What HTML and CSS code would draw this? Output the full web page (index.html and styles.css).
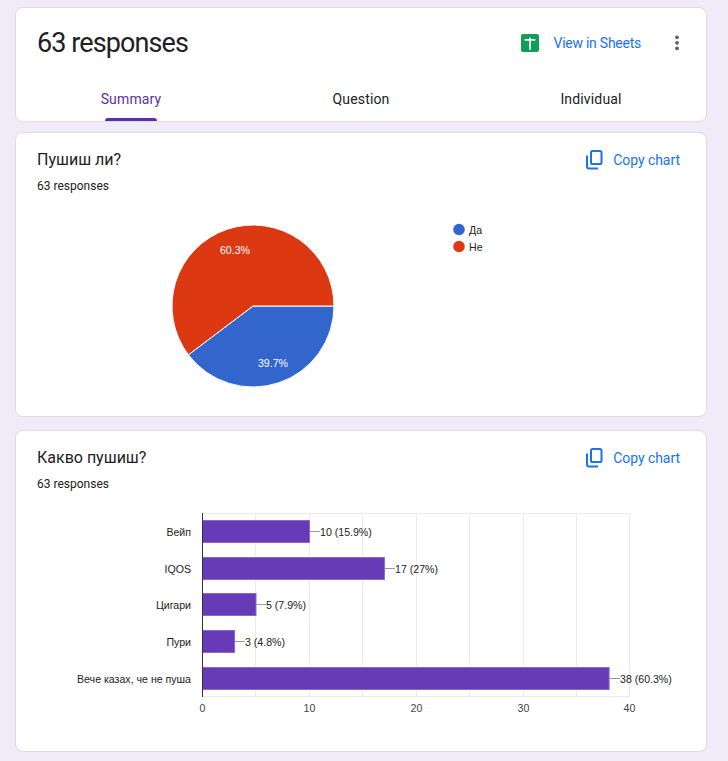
FILE: index.html
```html
<!DOCTYPE html>
<html>
<head>
<meta charset="utf-8">
<link rel="stylesheet" href="styles.css">
</head>
<body>
<div class="page">
  <section class="card head-card">
    <div class="head-row">
      <h1 class="count">63 responses</h1>
      <a class="sheets-btn">
        <svg class="sheets-icon" width="18" height="18" viewBox="0 0 18 18">
          <rect x="0" y="0" width="18" height="18" rx="2" fill="#0f9d58"/>
          <rect x="3.6" y="5" width="10.8" height="1.7" fill="#fff"/>
          <rect x="8.15" y="3.6" width="1.7" height="12.2" fill="#fff"/>
        </svg>
        <span>View in Sheets</span>
      </a>
      <button class="more-btn" aria-label="More">
        <svg width="4" height="16" viewBox="0 0 4 16">
          <circle cx="2" cy="2.3" r="1.9" fill="#5f6368"/>
          <circle cx="2" cy="7.8" r="1.9" fill="#5f6368"/>
          <circle cx="2" cy="13.3" r="1.9" fill="#5f6368"/>
        </svg>
      </button>
    </div>
    <nav class="tabs">
      <div class="tab active"><span>Summary</span><i class="indicator"></i></div>
      <div class="tab"><span>Question</span></div>
      <div class="tab"><span>Individual</span></div>
    </nav>
  </section>

  <section class="card q-card pie-card">
    <div class="q-head">
      <div class="q-titles">
        <h2 class="q-title">Пушиш ли?</h2>
        <div class="q-count">63 responses</div>
      </div>
      <a class="copy-btn">
        <svg width="18" height="20" viewBox="0 0 18 20">
          <rect x="6" y="1" width="10.5" height="13" rx="1.6" fill="none" stroke="#1a73e8" stroke-width="2"/>
          <path d="M2 5.5V16.5a2 2 0 0 0 2 2H13" fill="none" stroke="#1a73e8" stroke-width="2"/>
        </svg>
        <span>Copy chart</span>
      </a>
    </div>
    <svg class="chart pie" width="648" height="200" viewBox="0 0 648 200">
      <path d="M216 106 L297 106 A81 81 0 0 1 151.39 154.85 Z" fill="#3366cc" stroke="#fff" stroke-width="1"/>
      <path d="M216 106 L151.39 154.85 A81 81 0 1 1 297 106 Z" fill="#dc3912" stroke="#fff" stroke-width="1"/>
      <text x="198" y="54" class="pie-label" text-anchor="middle">60.3%</text>
      <text x="236" y="167" class="pie-label" text-anchor="middle">39.7%</text>
      <circle cx="422" cy="29.5" r="5.8" fill="#3366cc"/>
      <text x="432" y="33.5" class="legend">Да</text>
      <circle cx="422" cy="46.5" r="5.8" fill="#dc3912"/>
      <text x="432" y="50.5" class="legend">Не</text>
    </svg>
  </section>

  <section class="card q-card bar-card">
    <div class="q-head">
      <div class="q-titles">
        <h2 class="q-title">Какво пушиш?</h2>
        <div class="q-count">63 responses</div>
      </div>
      <a class="copy-btn">
        <svg width="18" height="20" viewBox="0 0 18 20">
          <rect x="6" y="1" width="10.5" height="13" rx="1.6" fill="none" stroke="#1a73e8" stroke-width="2"/>
          <path d="M2 5.5V16.5a2 2 0 0 0 2 2H13" fill="none" stroke="#1a73e8" stroke-width="2"/>
        </svg>
        <span>Copy chart</span>
      </a>
    </div>
    <svg class="chart bars" width="648" height="237" viewBox="0 0 648 237">
      <g stroke="#ebebeb" stroke-width="1">
        <line x1="218.5" y1="15" x2="218.5" y2="199"/>
        <line x1="272.5" y1="15" x2="272.5" y2="199"/>
        <line x1="325.5" y1="15" x2="325.5" y2="199"/>
        <line x1="379.5" y1="15" x2="379.5" y2="199"/>
        <line x1="432.5" y1="15" x2="432.5" y2="199"/>
        <line x1="486.5" y1="15" x2="486.5" y2="199"/>
        <line x1="539.5" y1="15" x2="539.5" y2="199"/>
        <line x1="592.5" y1="15" x2="592.5" y2="199"/>
        <line x1="165" y1="15.5" x2="593" y2="15.5"/>
        <line x1="165" y1="198.5" x2="593" y2="198.5"/>
      </g>
      <g fill="#673ab7" stroke="#8c68c9" stroke-width="1">
        <rect x="165.5" y="22.5" width="107" height="22"/>
        <rect x="165.5" y="59.5" width="181.9" height="22"/>
        <rect x="165.5" y="95.5" width="53.5" height="22"/>
        <rect x="165.5" y="132.5" width="32.1" height="22"/>
        <rect x="165.5" y="169.5" width="406.6" height="22"/>
      </g>
      <line x1="165.5" y1="15" x2="165.5" y2="199" stroke="#333" stroke-width="1"/>
      <g stroke="#999" stroke-width="1">
        <line x1="273" y1="33.5" x2="283" y2="33.5"/>
        <line x1="348" y1="70.5" x2="358" y2="70.5"/>
        <line x1="219" y1="106.5" x2="229" y2="106.5"/>
        <line x1="198" y1="143.5" x2="208" y2="143.5"/>
        <line x1="573" y1="180.5" x2="583" y2="180.5"/>
      </g>
      <g class="ann">
        <text x="283" y="37.5">10 (15.9%)</text>
        <text x="358" y="74.5">17 (27%)</text>
        <text x="229" y="110.5">5 (7.9%)</text>
        <text x="208" y="147.5">3 (4.8%)</text>
        <text x="583" y="184.5">38 (60.3%)</text>
      </g>
      <g class="cat" text-anchor="end">
        <text x="154" y="37.5">Вейп</text>
        <text x="154" y="74.5">IQOS</text>
        <text x="154" y="110.5">Цигари</text>
        <text x="154" y="147.5">Пури</text>
        <text x="154" y="184.5">Вече казах, че не пуша</text>
      </g>
      <g class="axis" text-anchor="middle">
        <text x="165.5" y="214">0</text>
        <text x="272.5" y="214">10</text>
        <text x="379.5" y="214">20</text>
        <text x="486.5" y="214">30</text>
        <text x="592.5" y="214">40</text>
      </g>
    </svg>
  </section>
</div>
</body>
</html>
```

FILE: styles.css
```css
html, body {
  margin: 0;
  padding: 0;
  background: #efebf8;
}
body {
  font-family: Roboto, "Liberation Sans", Arial, sans-serif;
  color: #202124;
}
.page {
  display: flex;
  flex-direction: column;
  gap: 10px;
  padding: 7px 21px 10px 15px;
}
.card {
  background: #fff;
  border: 1px solid #dadce0;
  border-radius: 8px;
  box-sizing: border-box;
}
.head-card {
  height: 115px;
  display: flex;
  flex-direction: column;
  overflow: hidden;
}
.head-row {
  display: flex;
  align-items: center;
  height: 60px;
  padding: 5px 9px 0 21px;
}
.count {
  margin: 0;
  flex: 1;
  font-size: 27px;
  font-weight: 400;
  letter-spacing: -0.9px;
  color: #202124;
  line-height: 36px;
}
.sheets-btn {
  display: inline-flex;
  align-items: center;
  gap: 14px;
  color: #1a73e8;
  font-size: 14px;
  font-weight: 400;
  letter-spacing: -0.25px;
  margin-right: 16px;
}
.sheets-icon {
  display: block;
}
.more-btn {
  width: 40px;
  height: 40px;
  border: 0;
  background: transparent;
  display: flex;
  align-items: center;
  justify-content: center;
  padding: 0;
}
.tabs {
  display: grid;
  grid-template-columns: 1fr 1fr 1fr;
  flex: 1;
}
.tab {
  display: flex;
  flex-direction: column;
  align-items: center;
  justify-content: flex-end;
  font-size: 14px;
  font-weight: 400;
  letter-spacing: 0.15px;
  color: #202124;
}
.tab span {
  line-height: 20px;
  margin-bottom: 9px;
}
.tab.active span {
  color: #5b2fa6;
}
.indicator {
  display: block;
  width: 52px;
  height: 3px;
  background: #5b2fa6;
  border-radius: 3px 3px 0 0;
}
.tab:not(.active)::after {
  content: "";
  display: block;
  height: 3px;
}
.q-card {
  padding: 15px 26px 16px 21px;
}
.bar-card {
  margin-top: 3px;
}
.q-head {
  display: flex;
  justify-content: space-between;
  align-items: flex-start;
}
.q-title {
  margin: 0;
  font-size: 16px;
  font-weight: 400;
  line-height: 24px;
  color: #202124;
}
.q-count {
  margin-top: 6px;
  font-size: 12px;
  line-height: 16px;
  color: #202124;
}
.copy-btn {
  display: inline-flex;
  align-items: center;
  gap: 10px;
  height: 24px;
  color: #1a73e8;
  font-size: 14px;
  font-weight: 400;
  letter-spacing: -0.05px;
}
.copy-btn svg {
  display: block;
}
.chart {
  display: block;
  margin-top: 6px;
}
.chart text {
  font-family: "Liberation Sans", Arial, sans-serif;
  font-size: 10.6px;
}
.pie-label {
  fill: #fff;
}
.legend {
  fill: #222;
}
.ann text, .cat text {
  fill: #222;
}
.axis text {
  fill: #444;
}
```
